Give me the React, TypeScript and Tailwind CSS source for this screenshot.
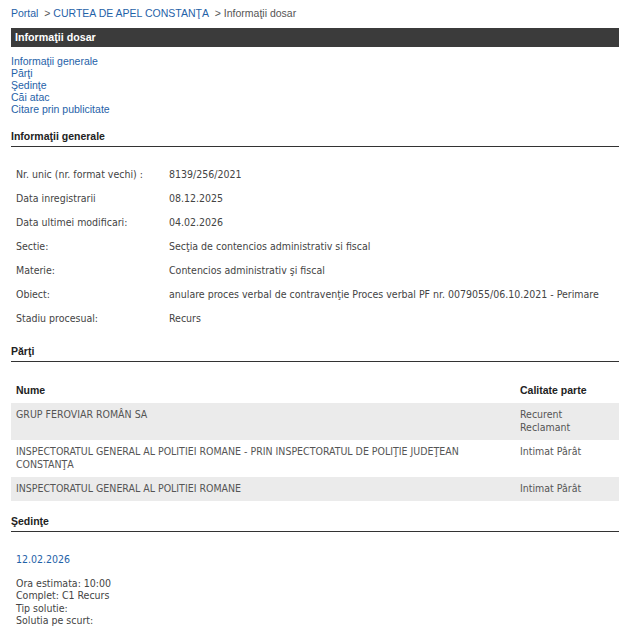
import React from "react";

const info: [string, string][] = [
  ["Nr. unic (nr. format vechi) :", "8139/256/2021"],
  ["Data inregistrarii", "08.12.2025"],
  ["Data ultimei modificari:", "04.02.2026"],
  ["Sectie:", "Secţia de contencios administrativ si fiscal"],
  ["Materie:", "Contencios administrativ şi fiscal"],
  [
    "Obiect:",
    "anulare proces verbal de contravenţie Proces verbal PF nr. 0079055/06.10.2021 - Perimare",
  ],
  ["Stadiu procesual:", "Recurs"],
];

interface Party {
  name: React.ReactNode;
  role: React.ReactNode;
}

const parties: Party[] = [
  {
    name: "GRUP FEROVIAR ROMÂN SA",
    role: (
      <>
        Recurent
        <br />
        Reclamant
      </>
    ),
  },
  {
    name: (
      <>
        INSPECTORATUL GENERAL AL POLITIEI ROMANE - PRIN INSPECTORATUL DE POLIŢIE JUDEŢEAN
        <br />
        CONSTANŢA
      </>
    ),
    role: "Intimat Pârât",
  },
  { name: "INSPECTORATUL GENERAL AL POLITIEI ROMANE", role: "Intimat Pârât" },
];

const SectionTitle = ({ title, className }: { title: string; className?: string }) => (
  <div
    className={`border-b border-[#333] pb-[3px] text-[10.5px] leading-[13px] font-bold text-[#222] ${className ?? ""}`}
  >
    {title}
  </div>
);

const body = "font-['DejaVu_Sans_Condensed','DejaVu_Sans',sans-serif] [font-stretch:condensed]";

export default function App() {
  return (
    <div className="min-h-[629px] bg-white pl-[11px] pr-[7px] pt-[7px] font-['Liberation_Sans',Arial,sans-serif]">
      {/* breadcrumb */}
      <div className="text-[10.5px] leading-[12px] text-[#555]">
        <span className="text-[#1f62a8]">Portal</span>&nbsp; &gt;{" "}
        <span className="text-[#1f62a8]">CURTEA DE APEL CONSTANŢA</span>&nbsp; &gt; Informaţii dosar
      </div>

      <div className="mt-[9px] h-[19px] bg-[#3b3b3b] px-[4px] text-[10.7px] leading-[19px] font-bold text-white">
        Informaţii dosar
      </div>

      <div className="mt-[8px] flex flex-col text-[10.5px] leading-[12px] text-[#1f62a8]">
        <a href="#generale">Informaţii generale</a>
        <a href="#parti">Părţi</a>
        <a href="#sedinte">Şedinţe</a>
        <a href="#cai">Căi atac</a>
        <a href="#citare">Citare prin publicitate</a>
      </div>

      <SectionTitle title="Informaţii generale" className="mt-[15px]" />
      <table className={`mt-[16px] w-full text-[10.5px] text-[#444] ${body}`}>
        <tbody>
          {info.map(([label, value]) => (
            <tr key={label} className="h-[24px]">
              <td className="w-[158px] pl-[5px] align-middle">{label}</td>
              <td className="whitespace-nowrap align-middle">{value}</td>
            </tr>
          ))}
        </tbody>
      </table>

      <SectionTitle title="Părţi" className="mt-[14px]" />
      <table className="mt-[16px] w-full">
        <thead>
          <tr className="h-[25px] text-left text-[10.5px] font-bold text-[#222]">
            <th className="w-[504px] px-[5px]">Nume</th>
            <th className="px-[5px]">Calitate parte</th>
          </tr>
        </thead>
        <tbody className={`text-[10.5px] leading-[13px] text-[#555] ${body}`}>
          {parties.map((p, i) => (
            <tr key={i} className={i % 2 === 0 ? "bg-[#ebebeb]" : "bg-white"}>
              <td className="px-[5px] pt-[5px] pb-[6px] align-top">{p.name}</td>
              <td className="px-[5px] pt-[5px] pb-[6px] align-top">{p.role}</td>
            </tr>
          ))}
        </tbody>
      </table>

      <SectionTitle title="Şedinţe" className="mt-[14px]" />
      <div className={`px-[5px] text-[10.5px] ${body}`}>
        <div className="mt-[21px] leading-[13px] text-[#1f62a8]">12.02.2026</div>
        <div className="mt-[11px] leading-[12.3px] text-[#444]">
          <div>Ora estimata: 10:00</div>
          <div>Complet: C1 Recurs</div>
          <div>Tip solutie:</div>
          <div>Solutia pe scurt:</div>
        </div>
      </div>
    </div>
  );
}
